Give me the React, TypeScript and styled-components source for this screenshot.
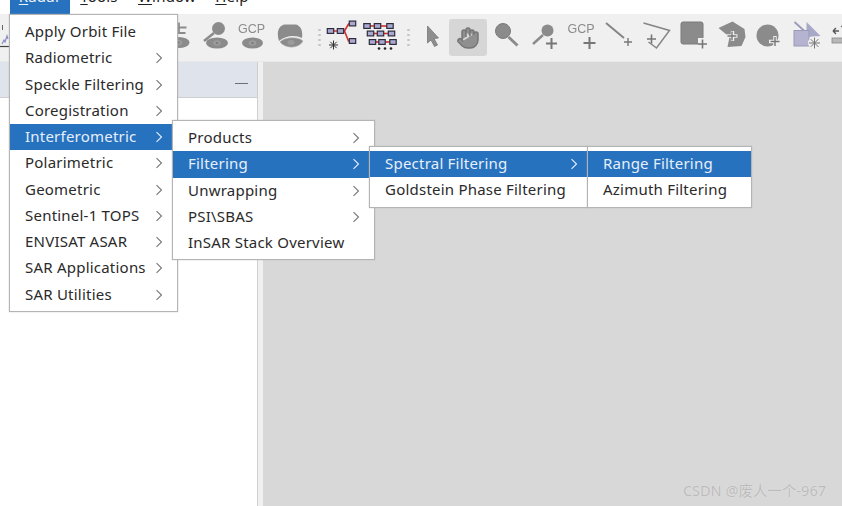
import React from 'react';
import styled, { createGlobalStyle } from 'styled-components';
import { Hand } from 'lucide-react';

const Global = createGlobalStyle`
  html, body { margin: 0; padding: 0; width: 842px; height: 506px; overflow: hidden; background: #fff; }
  #root { width: 842px; height: 506px; }
`;

const Page = styled.div`
  position: relative;
  width: 842px;
  height: 506px;
  display: flex;
  flex-direction: column;
  overflow: hidden;
  font-family: "Noto Sans", "Liberation Sans", sans-serif;
`;

const MenuBar = styled.div`
  height: 14px;
  flex: none;
  display: flex;
  align-items: flex-end;
  padding-left: 10px;
  overflow: hidden;
  background: #fff;
`;

const BarItem = styled.div<{ $active?: boolean; $w: number }>`
  width: ${p => p.$w}px;
  height: 14px;
  flex: none;
  display: flex;
  justify-content: center;
  align-items: flex-end;
  background: ${p => (p.$active ? '#2672bf' : 'transparent')};
  color: ${p => (p.$active ? '#eef4fb' : '#222')};
  font-size: 15px;
  line-height: 20px;
  letter-spacing: 0.2px;
  span { display: block; margin-bottom: 8px; }
  u { text-underline-offset: 2px; }
`;

const ToolBar = styled.div`
  height: 48px;
  flex: none;
  display: flex;
  align-items: center;
  background: #f0f0f0;
  overflow: hidden;
  box-sizing: border-box;
  border-bottom: 1px solid #e8e8e8;
`;

const ToolButton = styled.div<{ $on?: boolean; $w?: number }>`
  width: ${p => p.$w ?? 37.5}px;
  height: 37px;
  flex: none;
  display: flex;
  align-items: center;
  justify-content: center;
  border-radius: 3px;
  background: ${p => (p.$on ? '#d6d6d6' : 'transparent')};
  svg { flex: none; display: block; filter: blur(0.5px); overflow: visible; }
`;

const ToolSep = styled.div`
  width: 14px;
  height: 22px;
  flex: none;
  display: flex;
  flex-direction: column;
  justify-content: space-between;
  align-items: center;
  padding: 2px 0 2px 7px;
  box-sizing: border-box;
  i { display: block; width: 2.5px; height: 2.5px; border-radius: 50%; background: #c6c6c6; }
`;

const Body = styled.div`
  flex: 1;
  min-height: 0;
  display: flex;
  background: #f0f0f0;
`;

const SidePanel = styled.div`
  width: 258px;
  flex: none;
  display: flex;
  flex-direction: column;
  box-sizing: border-box;
  border-right: 1px solid #cfcfcf;
`;

const PanelHeader = styled.div`
  height: 36px;
  flex: none;
  background: #dfe3eb;
  border-bottom: 1px solid #cdcdcd;
  display: flex;
  align-items: flex-end;
  justify-content: flex-end;
  padding: 0 9px 13px 0;
  box-sizing: border-box;
  i { display: block; width: 13px; height: 1.5px; background: #6f6f6f; }
`;

const PanelBody = styled.div`
  flex: 1;
  background: #fff;
`;

const Viewport = styled.div`
  flex: 1;
  margin-left: 5px;
  background: #d8d8d8;
`;

const Menu = styled.div<{ $x: number; $y: number; $w: number }>`
  position: absolute;
  left: ${p => p.$x}px;
  top: ${p => p.$y}px;
  width: ${p => p.$w}px;
  box-sizing: border-box;
  padding: 4px 0 3px;
  background: #fff;
  border: 1px solid #b4b4b4;
  box-shadow: 0 0 1px #b4b4b4;
`;

const Row = styled.div<{ $on?: boolean; $inset?: number }>`
  height: 26.25px;
  display: flex;
  align-items: center;
  justify-content: space-between;
  padding: 0 ${p => p.$inset ?? 13}px 0 15px;
  background: ${p => (p.$on ? '#2672bf' : 'transparent')};
  color: ${p => (p.$on ? '#e6eff9' : '#2a2a2a')};
  font-size: 15px;
  letter-spacing: 0.22px;
  white-space: nowrap;
  span { display: block; margin-bottom: 2px; }
  svg { flex: none; display: block; }
`;

const Watermark = styled.div`
  position: absolute;
  right: 16px;
  bottom: 7px;
  font-family: "Noto Sans", "Noto Sans CJK SC", sans-serif;
  font-size: 14.5px;
  line-height: 18px;
  color: #bcbcbc;
  text-shadow: 0 0 1px #ececec;
`;

const Chevron = ({ on }: { on?: boolean }) => (
  <svg width="8" height="12" viewBox="0 0 8 12">
    <path d="M1.5 1.2 L6.5 6 L1.5 10.8" fill="none" stroke={on ? '#e6eff9' : '#777'} strokeWidth="1.1" />
  </svg>
);

type Item = { label: string; sub?: boolean; on?: boolean };

const Items = ({ items, inset }: { items: Item[]; inset?: number }) => (
  <>
    {items.map(i => (
      <Row key={i.label} $on={i.on} $inset={inset}>
        <span>{i.label}</span>
        {i.sub && <Chevron on={i.on} />}
      </Row>
    ))}
  </>
);

const G = '#8b8b8b';
const D = '#7a7a7a';

/* Every icon is drawn in page coordinates; cx is the button's centre. */
const Ico = ({ cx, children }: { cx: number; children: React.ReactNode }) => (
  <svg width="36" height="36" viewBox={`${cx - 18} 20 36 36`}>{children}</svg>
);

const Eye = ({ x, y, rx = 11 }: { x: number; y: number; rx?: number }) => (
  <g>
    <ellipse cx={x} cy={y} rx={rx} ry={5.6} fill={G} />
    <ellipse cx={x} cy={y} rx={3.8} ry={2.8} fill="#9c9c9c" />
    <circle cx={x} cy={y} r={1.3} fill="#808080" />
  </g>
);

const Plus = ({ x, y, r = 5.5, w = 2 }: { x: number; y: number; r?: number; w?: number }) => (
  <path d={`M${x - r} ${y}H${x + r}M${x} ${y - r}V${y + r}`} stroke="#777" strokeWidth={w} fill="none" />
);

const GcpText = ({ x, y }: { x: number; y: number }) => (
  <text x={x} y={y} fontFamily="Liberation Sans, sans-serif" fontSize="12.5" fill="#8c8c8c" textAnchor="middle">GCP</text>
);

const Node = ({ x, y }: { x: number; y: number }) => (
  <rect x={x - 3.2} y={y - 2.4} width={6.4} height={4.8} fill="#aaaad0" stroke="#2c2c3c" strokeWidth="1.2" />
);

const Star = ({ x, y, r = 5, c = '#333' }: { x: number; y: number; r?: number; c?: string }) => (
  <path
    d={`M${x - r} ${y}H${x + r}M${x} ${y - r}V${y + r}M${x - r * 0.7} ${y - r * 0.7}L${x + r * 0.7} ${y + r * 0.7}M${x - r * 0.7} ${y + r * 0.7}L${x + r * 0.7} ${y - r * 0.7}`}
    stroke={c}
    strokeWidth="1"
  />
);

const rowGroup = (y: number, xs: number[]) => (
  <g key={y}>
    <path d={`M${xs[0]} ${y}H${xs[2]}`} stroke="#d4302c" strokeWidth="1.6" />
    {xs.map(x => <Node key={x} x={x} y={y} />)}
  </g>
);

const Tools = () => (
  <>
    <ToolButton $w={8.75}>
      <svg width="9" height="28" viewBox="0 0 9 28">
        <path d="M0 22.500H9" fill="none" stroke="#444" strokeWidth="1.2" />
        <path d="M2.500 1V6" stroke="#666" strokeWidth="1" />
        <path d="M2 20L4 16L5 18L7 12L8 15" fill="none" stroke="#8a8ac4" strokeWidth="1.2" />
      </svg>
    </ToolButton>
    {[27.5, 65, 102.5, 140].map(c => <ToolButton key={c} />)}
    <ToolButton>
      <Ico cx={177.5}>
        <path d="M171 27.5H186M178.5 22.5V33M173 33H185" stroke={G} strokeWidth="1.8" fill="none" />
        <Eye x={178} y={42.5} />
      </Ico>
    </ToolButton>
    <ToolButton>
      <Ico cx={215}>
        <circle cx="218.5" cy="28.5" r="6.5" fill={G} />
        <path d="M214 33L204 41" stroke={G} strokeWidth="2.6" />
        <Eye x={217} y={43} />
      </Ico>
    </ToolButton>
    <ToolButton>
      <Ico cx={252.5}>
        <GcpText x={251} y={33} />
        <Eye x={252} y={43} rx={10.5} />
      </Ico>
    </ToolButton>
    <ToolButton>
      <Ico cx={290}>
        <path d="M279 41C276 32 279 25 285 24.500H296C301 26 303 31 302 38C296 35 286 35 279 41Z" fill={G} />
        <path d="M280 42C284 37 298 36 303 41C299 49 285 49 280 42Z" fill={G} stroke="#b8b8b8" strokeWidth="0.6" />
        <ellipse cx="291" cy="42.500" rx="3.500" ry="2.500" fill="#9c9c9c" />
      </Ico>
    </ToolButton>
    <ToolSep><i /><i /><i /><i /></ToolSep>
    <ToolButton>
      <Ico cx={341.5}>
        <path d="M331 31H344L348 24H352M344 31L348 41H352" fill="none" stroke="#d4302c" strokeWidth="1.6" />
        <Node x={330} y={31} />
        <Node x={340} y={31} />
        <Node x={352} y={23.500} />
        <Node x={352} y={41} />
        <Star x={333} y={45} r={4.500} />
      </Ico>
    </ToolButton>
    <ToolButton>
      <Ico cx={379}>
        {rowGroup(26, [367, 377.500, 390])}
        {rowGroup(33.500, [370.500, 380.500, 391.500])}
        {rowGroup(42, [372.500, 382, 393])}
        <circle cx="379" cy="48.500" r="1.300" fill="#222" />
        <circle cx="385" cy="48.500" r="1.300" fill="#222" />
        <circle cx="391" cy="48.500" r="1.300" fill="#222" />
      </Ico>
    </ToolButton>
    <ToolSep><i /><i /><i /><i /></ToolSep>
    <ToolButton>
      <Ico cx={430.5}>
        <path d="M427 26L438 38L433.500 38.500L437 45L434 46.500L430.500 40L427 43Z" fill="#8f8f8f" stroke="#777" strokeWidth="0.8" />
      </Ico>
    </ToolButton>
    <ToolButton $on>
      <Hand size={24} color="#767676" fill="#8f8f8f" strokeWidth={1.5} />
    </ToolButton>
    <ToolButton>
      <Ico cx={505.5}>
        <circle cx="502.500" cy="31" r="7.500" fill={G} stroke={D} strokeWidth="1" />
        <path d="M508 37L517 45.500" stroke={G} strokeWidth="3" />
      </Ico>
    </ToolButton>
    <ToolButton>
      <Ico cx={543}>
        <circle cx="547.500" cy="30.500" r="6" fill={G} />
        <path d="M543 35L533 44" stroke={G} strokeWidth="2.4" />
        <Plus x={551.500} y={43.500} />
      </Ico>
    </ToolButton>
    <ToolButton>
      <Ico cx={580.5}>
        <GcpText x={580.500} y={33} />
        <Plus x={589} y={43} r={6} />
      </Ico>
    </ToolButton>
    <ToolButton>
      <Ico cx={618}>
        <path d="M606 23L624 38" stroke="#858585" strokeWidth="2" />
        <Plus x={628} y={42} r={4} w={1.4} />
      </Ico>
    </ToolButton>
    <ToolButton>
      <Ico cx={655.5}>
        <path d="M643 23L669 30.500L656 48L648 42" fill="none" stroke="#858585" strokeWidth="1.5" />
        <Plus x={651} y={39} r={4.500} w={1.6} />
      </Ico>
    </ToolButton>
    <ToolButton>
      <Ico cx={693}>
        <rect x="681" y="22" width="22" height="22" rx="2" fill={G} stroke="#7a7a7a" />
        <path d="M698 44.500H708V38H698Z" fill="#f0f0f0" />
        <Plus x={702.500} y={44} r={4.500} w={1.6} />
      </Ico>
    </ToolButton>
    <ToolButton>
      <Ico cx={730.5}>
        <path d="M718 28L732 21.500L744 29L745 37L741 46L727 47L729 37Z" fill={G} />
        <path d="M732 31V41M726 36H737" stroke="#f0f0f0" strokeWidth="3.400" />
        <Plus x={731.500} y={36} r={4.500} w={1.4} />
      </Ico>
    </ToolButton>
    <ToolButton>
      <Ico cx={768}>
        <circle cx="767.500" cy="35.500" r="11" fill={G} />
        <path d="M775 36V47M769 41.500H781" stroke="#f0f0f0" strokeWidth="3.400" />
        <Plus x={775} y={41.500} r={4.500} w={1.4} />
      </Ico>
    </ToolButton>
    <ToolButton>
      <Ico cx={805.5}>
        <path d="M794 22L805 32" stroke="#9a9ab8" strokeWidth="1.800" />
        <path d="M806 22L820 36L806 37Z" fill="#a8a8c8" />
        <rect x="793.500" y="30.500" width="15" height="15.500" fill="#b4b4d0" stroke="#9a9ab8" />
        <circle cx="814" cy="43" r="6.500" fill="#f0f0f0" />
        <Star x={814} y={43} r={5.500} c="#777" />
      </Ico>
    </ToolButton>
    <ToolButton>
      <Ico cx={843}>
        <path d="M833 31H839M833 31L836 28M833 31L836 34" stroke="#555" strokeWidth="1.400" fill="none" />
        <path d="M841 27L844 24L847 27" fill="none" stroke="#777" strokeWidth="1.200" />
        <rect x="832" y="38" width="16" height="5" fill="#b8b8b8" stroke="#888" strokeWidth="0.800" />
      </Ico>
    </ToolButton>
  </>
);

const main: Item[] = [
  { label: 'Apply Orbit File' },
  { label: 'Radiometric', sub: true },
  { label: 'Speckle Filtering', sub: true },
  { label: 'Coregistration', sub: true },
  { label: 'Interferometric', sub: true, on: true },
  { label: 'Polarimetric', sub: true },
  { label: 'Geometric', sub: true },
  { label: 'Sentinel-1 TOPS', sub: true },
  { label: 'ENVISAT ASAR', sub: true },
  { label: 'SAR Applications', sub: true },
  { label: 'SAR Utilities', sub: true },
];
const insar: Item[] = [
  { label: 'Products', sub: true },
  { label: 'Filtering', sub: true, on: true },
  { label: 'Unwrapping', sub: true },
  { label: 'PSI\\SBAS', sub: true },
  { label: 'InSAR Stack Overview' },
];
const filtering: Item[] = [
  { label: 'Spectral Filtering', sub: true, on: true },
  { label: 'Goldstein Phase Filtering' },
];
const spectral: Item[] = [
  { label: 'Range Filtering', on: true },
  { label: 'Azimuth Filtering' },
];

export default function App() {
  return (
    <Page>
      <Global />
      <MenuBar>
        <BarItem $active $w={60}><span><u>R</u>adar</span></BarItem>
        <BarItem $w={58}><span><u>T</u>ools</span></BarItem>
        <BarItem $w={78}><span><u>W</u>indow</span></BarItem>
        <BarItem $w={52}><span><u>H</u>elp</span></BarItem>
      </MenuBar>
      <ToolBar><Tools /></ToolBar>
      <Body>
        <SidePanel>
          <PanelHeader><i /></PanelHeader>
          <PanelBody />
        </SidePanel>
        <Viewport />
      </Body>
      <Menu $x={9} $y={14} $w={169}><Items items={main} inset={14} /></Menu>
      <Menu $x={172} $y={120} $w={203}><Items items={insar} inset={14} /></Menu>
      <Menu $x={369} $y={146} $w={219}><Items items={filtering} inset={9} /></Menu>
      <Menu $x={587} $y={146} $w={165}><Items items={spectral} /></Menu>
      <Watermark>CSDN @废人一个-967</Watermark>
    </Page>
  );
}
